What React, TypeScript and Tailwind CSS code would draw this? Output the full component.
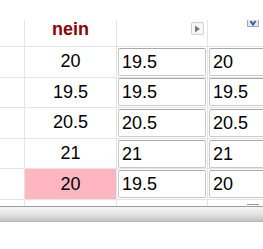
import React from "react";

const rows: { a: string; b: string; c: string; pink?: boolean }[] = [
  { a: "20", b: "19.5", c: "20" },
  { a: "19.5", b: "19.5", c: "19.5" },
  { a: "20.5", b: "20.5", c: "20.5" },
  { a: "21", b: "21", c: "21" },
  { a: "20", b: "19.5", c: "20", pink: true },
];

function Box({ v }: { v: string }) {
  return (
    <div className="h-[28px] w-[88px] shrink-0 mx-px rounded-[2px] border border-[#c9c9c9] border-t-[#a9a9a9] bg-white flex items-center pl-[3px] text-[18px] text-black leading-none">
      {v}
    </div>
  );
}

export default function App() {
  return (
    <div className="w-[263px] h-[249px] bg-white overflow-hidden font-['Liberation_Sans',Arial,sans-serif]">
      <div className="h-[20px]" />
      {/* header */}
      <div className="flex h-[27px] border-b border-[#e4e4e4]">
        <div className="w-[25px] shrink-0 border-r border-[#e4e4e4]" />
        <div className="w-[92px] shrink-0 border-r border-[#e4e4e4] flex justify-center">
          <span className="text-[18px] leading-[18px] font-bold text-[#8b0000]">nein</span>
        </div>
        <div className="w-[91px] shrink-0 border-r border-[#e4e4e4] flex justify-end items-start pt-[2px] pr-[3px]">
          <div className="w-[13px] h-[13px] rounded-[2px] border border-[#d0d0d0] bg-[#f7f7f7] flex items-center justify-center">
            <svg width="7" height="8" viewBox="0 0 7 8">
              <path d="M1 0.5 L6 4 L1 7.5 Z" fill="#7a7a7a" />
            </svg>
          </div>
        </div>
        <div className="flex-1 flex items-start">
          <div className="ml-[39px]">
            <svg width="12" height="7" viewBox="0 0 12 7">
              <rect x="0" y="-1" width="12" height="8" fill="#e4eaf5" />
              <path d="M0.5 0 V6.5 H11.5 V0" fill="none" stroke="#a8a8a8" strokeWidth="1" />
              <path d="M3.5 1 L6 4.5 L8.5 1" fill="none" stroke="#3a56a8" strokeWidth="2" />
            </svg>
          </div>
        </div>
      </div>
      {rows.map((r, i) => (
        <div key={i} className="flex h-[30.6px] border-b border-[#e4e4e4]">
          <div className="w-[25px] shrink-0 border-r border-[#e4e4e4]" />
          <div
            className={
              "w-[92px] shrink-0 border-r border-[#e4e4e4] flex items-center justify-center text-[18px] text-black " +
              (r.pink ? "bg-[#ffb6c1]" : "")
            }
          >
            {r.a}
          </div>
          <div className="w-[91px] shrink-0 border-r border-[#e4e4e4] flex items-center">
            <Box v={r.b} />
          </div>
          <div className="flex-1 flex items-center overflow-hidden">
            <Box v={r.c} />
          </div>
        </div>
      ))}
      {/* filler */}
      <div className="flex h-[6px]">
        <div className="w-[25px] shrink-0 border-r border-[#e4e4e4]" />
        <div className="w-[92px] shrink-0 border-r border-[#e4e4e4]" />
        <div className="w-[91px] shrink-0 border-r border-[#e4e4e4]" />
        <div className="flex-1">
          <div className="ml-[39px] mt-[4px] w-[12px] h-px bg-[#9a9a9a]" />
        </div>
      </div>
      {/* scrollbar */}
      <div className="h-[16px] border-t border-b border-t-[#9a9a9a] border-b-[#b5b5b5] bg-gradient-to-b from-[#f6f6f6] via-[#e4e4e4] to-[#c4c4c4]" />
    </div>
  );
}
